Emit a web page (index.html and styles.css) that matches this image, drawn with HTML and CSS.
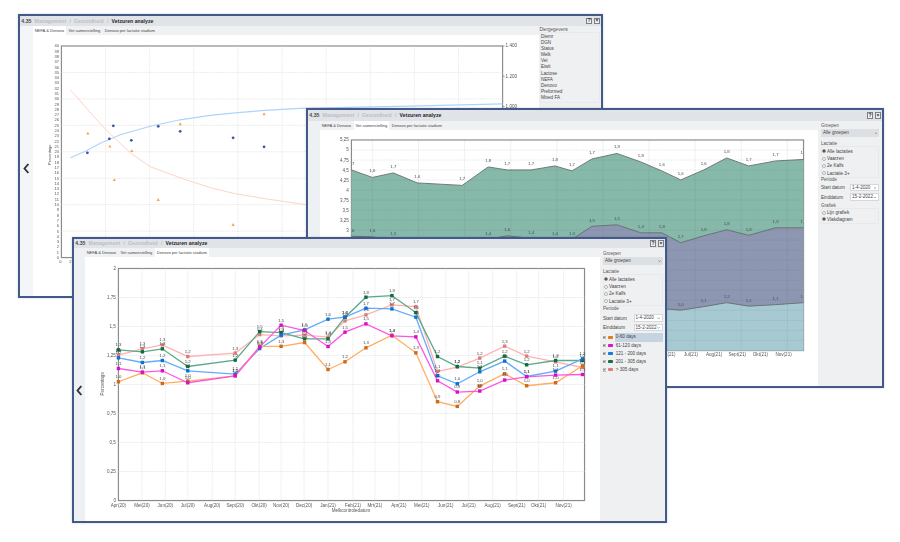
FILE: index.html
```html
<!DOCTYPE html>
<html lang="nl">
<head>
<meta charset="utf-8">
<title>Vetzuren analyze</title>
<link rel="stylesheet" href="styles.css">
</head>
<body>
<div class="desktop">

  <section class="win win-a">
    <header class="win-head">
      <span class="crumb-no">4.35</span><span class="crumb">Management</span><span class="crumb">/</span><span class="crumb">Gezondheid</span><span class="crumb">/</span><span class="crumb-now">Vetzuren analyze</span>
      <span class="btns"><span class="btn">?</span><span class="btn">×</span></span>
    </header>
    <div class="win-body">
      <div class="rail"><svg class="chev" viewBox="0 0 6 10"><path d="M5 .8 1.4 5 5 9.2"/></svg></div>
      <main class="main">
        <nav class="tabs"><span class="tab on">NEFA &amp; Denovo</span><span class="tab">Vet samenstelling</span><span class="tab">Denovo per lactatie stadium</span></nav>
        <svg id="chart-a" class="chart chart-a" viewBox="33 35 506 261.5"></svg>
      </main>
      <aside class="side side-a">
        <div class="grp-title">Diergegevens</div>
        <div class="box list">
          <div class="item">Diernr</div><div class="item">DGN</div><div class="item">Status</div><div class="item">Melk</div><div class="item">Vet</div><div class="item">Eiwit</div><div class="item">Lactose</div><div class="item">NEFA</div><div class="item">Denovo</div><div class="item">Preformed</div><div class="item">Mixed FA</div>
        </div>
        <div class="grp-title gap-b">Groepen</div>
      </aside>
    </div>
  </section>

  <section class="win win-b">
    <header class="win-head">
      <span class="crumb-no">4.35</span><span class="crumb">Management</span><span class="crumb">/</span><span class="crumb">Gezondheid</span><span class="crumb">/</span><span class="crumb-now">Vetzuren analyze</span>
      <span class="btns"><span class="btn">?</span><span class="btn">×</span></span>
    </header>
    <div class="win-body">
      <div class="rail"></div>
      <main class="main">
        <nav class="tabs"><span class="tab">NEFA &amp; Denovo</span><span class="tab on">Vet samenstelling</span><span class="tab">Denovo per lactatie stadium</span></nav>
        <svg id="chart-b" class="chart chart-b" viewBox="320 130 498 256.5"></svg>
      </main>
      <aside class="side side-b">
        <div class="grp-title">Groepen</div>
        <div class="select">Alle groepen</div>
        <div class="grp-title gap-a">Lactatie</div>
        <div class="box opts">
          <div class="opt"><span class="radio on"></span>Alle lactaties</div>
          <div class="opt"><span class="radio"></span>Vaarzen</div>
          <div class="opt"><span class="radio"></span>2e Kalfs</div>
          <div class="opt"><span class="radio"></span>Lactatie 3+</div>
        </div>
        <div class="grp-title gap-b">Periode</div>
        <div class="field"><span>Start datum</span><span class="date">1-4-2020</span></div>
        <div class="field"><span>Einddatum</span><span class="date">15-2-2022</span></div>
        <div class="grp-title gap-g">Grafiek</div>
        <div class="box opts">
          <div class="opt short"><span class="radio"></span>Lijn grafiek</div>
          <div class="opt short"><span class="radio on"></span>Vlakdiagram</div>
        </div>
      </aside>
    </div>
  </section>

  <section class="win win-c">
    <header class="win-head">
      <span class="crumb-no">4.35</span><span class="crumb">Management</span><span class="crumb">/</span><span class="crumb">Gezondheid</span><span class="crumb">/</span><span class="crumb-now">Vetzuren analyze</span>
      <span class="btns"><span class="btn">?</span><span class="btn">×</span></span>
    </header>
    <div class="win-body">
      <div class="rail"><svg class="chev" viewBox="0 0 6 10"><path d="M5 .8 1.4 5 5 9.2"/></svg></div>
      <main class="main">
        <nav class="tabs"><span class="tab">NEFA &amp; Denovo</span><span class="tab">Vet samenstelling</span><span class="tab on">Denovo per lactatie stadium</span></nav>
        <svg id="chart-c" class="chart chart-c" viewBox="85 257 515 264.5"></svg>
      </main>
      <aside class="side side-c">
        <div class="grp-title">Groepen</div>
        <div class="select">Alle groepen</div>
        <div class="grp-title gap-a">Lactatie</div>
        <div class="box opts">
          <div class="opt"><span class="radio on"></span>Alle lactaties</div>
          <div class="opt"><span class="radio"></span>Vaarzen</div>
          <div class="opt"><span class="radio"></span>2e Kalfs</div>
          <div class="opt"><span class="radio"></span>Lactatie 3+</div>
        </div>
        <div class="grp-title gap-b">Periode</div>
        <div class="field"><span>Start datum</span><span class="date">1-4-2020</span></div>
        <div class="field"><span>Einddatum</span><span class="date">15-2-2022</span></div>
        <ul class="legend">
          <li class="leg"><span class="check"></span><span class="swatch s-orange"></span><span class="leg-name sel">0-60 days</span></li>
          <li class="leg"><span class="check"></span><span class="swatch s-magenta"></span><span class="leg-name">61-120 days</span></li>
          <li class="leg"><span class="check"></span><span class="swatch s-blue"></span><span class="leg-name">121 - 200 days</span></li>
          <li class="leg"><span class="check"></span><span class="swatch s-green"></span><span class="leg-name">201 - 305 days</span></li>
          <li class="leg"><span class="check"></span><span class="swatch s-salmon"></span><span class="leg-name">&gt; 305 days</span></li>
        </ul>
      </aside>
    </div>
  </section>

</div>
<script src="charts.js"></script>
</body>
</html>
```

FILE: styles.css
```css
* { box-sizing: border-box; }
html, body { margin: 0; padding: 0; background: #fff; }
body { width: 900px; height: 542px; overflow: hidden; font-family: "Liberation Sans", Arial, sans-serif; }
.desktop { position: relative; width: 900px; height: 542px; filter: blur(.42px); }

.win { position: absolute; display: flex; flex-direction: column; background: #fff; border: 2px solid #42598a; box-shadow: 0 0 2px rgba(40,60,100,.25); }
.win-a { left: 17.5px; top: 13.5px; width: 585.5px; height: 284.5px; }
.win-b { left: 305.5px; top: 107.5px; width: 578.5px; height: 280.5px; }
.win-c { left: 71.5px; top: 236.5px; width: 595.5px; height: 286.5px; }

.win-head { display: flex; align-items: center; gap: 3.2px; flex: none; padding: 0 1px 0 1.8px; background: #e0e4e8; font-size: 5.1px; font-weight: 700; letter-spacing: .05px; white-space: nowrap; }
.win-a .win-head { height: 10.5px; }
.win-b .win-head { height: 11.5px; }
.win-c .win-head { height: 9.5px; }
.crumb-no { color: #4a4a4a; }
.crumb { color: #bcbec2; }
.crumb-now { color: #222; }
.btns { display: flex; gap: 2px; margin-left: auto; }
.btn { display: flex; align-items: center; justify-content: center; width: 6px; height: 6.5px; background: #f0f2f4; border: 1px solid #7a7f86; font-size: 5px; line-height: 1; color: #222; letter-spacing: 0; }

.win-body { flex: 1; display: flex; min-height: 0; }
.rail { flex: none; display: flex; align-items: center; justify-content: center; background: #eef1f4; }
.win-a .rail { width: 13.5px; padding-top: 14px; background: #f3f5f8; }
.win-b .rail { width: 12.5px; }
.win-c .rail { width: 11.5px; padding-top: 12px; }
.chev { width: 6.4px; height: 11px; }
.chev path { fill: none; stroke: #333; stroke-width: 1.7; }

.main { flex: 1; display: flex; flex-direction: column; min-width: 0; }
.tabs { display: flex; flex: none; height: 9px; background: #f0f1f2; font-size: 4.05px; color: #444; align-items: stretch; white-space: nowrap; }
.tab { display: flex; align-items: center; padding: 0 1.7px; margin-right: 1.2px; }
.tab.on { background: #fff; }
.chart { display: block; flex: 1; width: 100%; min-height: 0; }
.chart-a { width: 506px; height: 261.5px; }
.chart-b { width: 498px; height: 256.5px; }
.chart-c { width: 515px; height: 264.5px; }

.side { flex: none; display: flex; flex-direction: column; background: #eff0f1; font-size: 4.6px; color: #444; }
.side-a { width: 62.5px; padding: .5px 1.5px 0 1px; }
.side-b { width: 64.5px; padding: 1.5px 3px 0 3.5px; }
.side-c { width: 65.5px; padding: 2.5px 2.5px 0 3.5px; }
.grp-title { flex: none; height: 5px; line-height: 5px; color: #555; }
.gap-a { margin-top: 4px; }
.gap-b { margin-top: .2px; }
.gap-g { margin-top: 2px; }
.side-a .gap-b { margin-top: 5px; }
.side-b .gap-b { margin-top: -.8px; }
.box { border: 1px solid #e8e9eb; }
.opts { padding-top: .6px; }
.list { padding: 1px 0 0 .4px; }
.item { height: 6.2px; line-height: 6.2px; }
.select { position: relative; height: 8px; margin-top: 1.5px; padding-left: 2px; line-height: 8px; background: #dde0e3; }
.select::after, .date::after { content: ""; position: absolute; right: 1.6px; top: 50%; width: 2.8px; height: 1.7px; margin-top: -.8px; background: #777; clip-path: polygon(0 0, 50% 65%, 100% 0, 100% 35%, 50% 100%, 0 35%); }
.opt { display: flex; align-items: center; gap: 1px; height: 7.3px; }
.opt.short { height: 6.5px; }
.radio { flex: none; width: 4px; height: 4px; border: 1px solid #aeb0b2; border-radius: 50%; background: #fff; }
.radio.on { background: #3c3c3c; border-color: #9a9a9a; }
.field { display: flex; align-items: center; justify-content: space-between; height: 7.5px; margin-top: 2px; }
.grp-title + .field { margin-top: 3.5px; }
.side-b .grp-title + .field { margin-top: 2px; }
.date { position: relative; width: 29px; height: 100%; padding-left: 1px; line-height: 5.5px; background: #fff; border: 1px solid #d6d8db; }
.legend { list-style: none; margin: 2px 0 0; padding: 0; }
.leg { display: flex; align-items: center; height: 8.1px; }
.check { position: relative; flex: none; width: 3.4px; height: 3.4px; background: #f4f4f4; box-shadow: inset 0 0 0 .4px #9a9a9a; margin-left: -.5px; }
.check::after { content: ""; position: absolute; left: .5px; top: .5px; width: 2.4px; height: 2px; background: #333; clip-path: polygon(0 45%, 15% 30%, 40% 60%, 85% 0, 100% 20%, 40% 100%); }
.swatch { flex: none; width: 5px; height: 2.8px; margin: 0 1.2px 0 2.6px; border-radius: .8px; background: currentColor; }
.s-orange { color: #dd7e20; }
.s-magenta { color: #d418c4; }
.s-blue { color: #1a7ad8; }
.s-green { color: #14733f; }
.s-salmon { color: #d97f7f; }
.leg-name { flex: 1; height: 100%; padding-left: 1px; line-height: 8.1px; }
.leg-name.sel { background: #c6d4e1; }

.chart text { font-family: "Liberation Sans", Arial, sans-serif; font-size: 4.6px; fill: #555; }
.chart .dlabel { fill: #4a4a4a; font-size: 4.3px; }
.chart .tiny { font-size: 4px; }
.frame { fill: #fff; stroke: #8c8c8c; stroke-width: 1.2; }
.frame-line { fill: none; stroke: #8c8c8c; stroke-width: .9; }
.grid { stroke: #d6d6d6; stroke-width: .6; stroke-dasharray: 1 .8; fill: none; }
.grid-over { stroke: rgba(60,85,85,.28); stroke-width: .5; stroke-dasharray: 1 .8; fill: none; }
.a-green { fill: #86b9a9; }
.a-purple { fill: #8e97b2; }
.a-teal { fill: #a7cad2; }
.a-line { fill: none; stroke: #666e6e; stroke-width: .9; }
.trend-blue { fill: none; stroke: #aed3fb; stroke-width: 1.1; }
.trend-orange { fill: none; stroke: #fed2bd; stroke-width: .95; }
.dot-blue { fill: #3d57a6; }
.tri-orange { fill: #f6a545; }
.l-orange { fill: none; stroke: #ffad60; stroke-width: 1.3; }
.l-magenta { fill: none; stroke: #ff55e6; stroke-width: 1.3; }
.l-blue { fill: none; stroke: #5fadf9; stroke-width: 1.3; }
.l-green { fill: none; stroke: #5aa98a; stroke-width: 1.3; }
.l-salmon { fill: none; stroke: #ffb3b0; stroke-width: 1.3; }
.m-orange { fill: #c96c1c; }
.m-magenta { fill: #d612c0; }
.m-blue { fill: #0e6fd0; }
.m-green { fill: #0e6b3b; }
.m-salmon { fill: #d97d7d; }
```

FILE: charts.js
```js
(function () {
  var NS = "http://www.w3.org/2000/svg";

  function add(parent, tag, attrs, text) {
    var el = document.createElementNS(NS, tag);
    for (var k in attrs) el.setAttribute(k, attrs[k]);
    if (text !== undefined) el.textContent = text;
    parent.appendChild(el);
    return el;
  }
  function pts(list) {
    return list.map(function (p) { return p[0] + "," + p[1]; }).join(" ");
  }
  function hLine(svg, cls, x1, x2, y) { add(svg, "line", { "class": cls, x1: x1, x2: x2, y1: y, y2: y }); }
  function vLine(svg, cls, y1, y2, x) { add(svg, "line", { "class": cls, x1: x, x2: x, y1: y1, y2: y2 }); }
  function label(svg, x, y, text, anchor, cls) {
    return add(svg, "text", { x: x, y: y, "text-anchor": anchor || "middle", "class": cls || "" }, text);
  }
  function clip(svg, id, x, y, w, h) {
    var cp = add(add(svg, "defs", {}), "clipPath", { id: id });
    add(cp, "rect", { x: x, y: y, width: w, height: h });
  }

  /* ---------- NEFA & Denovo (back window) ---------- */
  (function () {
    var svg = document.getElementById("chart-a");
    var L = 61, R = 503, T = 46, B = 258;
    add(svg, "rect", { "class": "frame", x: L, y: T, width: R - L, height: B - T });
    for (var v = 5; v < 40; v += 5) hLine(svg, "grid", L, R, B - v * 5.3);
    for (var i = 1; i < 10; i++) vLine(svg, "grid", T, B, L + i * 44.2);
    for (v = 0; v <= 40; v++) label(svg, 58.5, B - v * 5.3 + 1.4, String(v), "end", "tiny");
    label(svg, 60, 263.5, "0", "middle", "tiny");
    label(svg, 70, 263.5, "2", "middle", "tiny");
    ["1.400", "1.200", "1.000"].forEach(function (t, n) {
      hLine(svg, "frame-line", R, R + 2, T + n * 30.3);
      label(svg, 506, T + n * 30.3 + 1.5, t, "start");
    });
    var title = label(svg, 0, 0, "Percentage", "middle", "tiny");
    title.setAttribute("transform", "translate(50.5 155) rotate(-90)");

    add(svg, "polyline", { "class": "trend-blue", points: pts([[70,158],[85,151.5],[100,143.5],[120,135],[150,126.5],[180,120],[210,115.5],[235,113],[265,110.5],[300,108.5],[350,107.5],[420,106],[503,104]]) });
    add(svg, "polyline", { "class": "trend-orange", points: pts([[70,90],[85,107],[100,124],[115,139],[130,153],[150,167],[180,178],[210,188],[235,194],[265,199],[306,205],[360,214],[503,225]]) });
    [[87,153],[109,139],[113,126],[131,140.5],[158,126.5],[180,131.5],[233,138],[264,147]].forEach(function (p) {
      add(svg, "circle", { "class": "dot-blue", cx: p[0], cy: p[1], r: 1.4 });
    });
    [[87.5,133.5],[109.5,146.5],[114,180],[131.5,151],[158,200],[180,124],[233,225],[264,114]].forEach(function (p) {
      add(svg, "polygon", { "class": "tri-orange", points: (p[0]-1.6)+","+(p[1]+1.3)+" "+(p[0]+1.6)+","+(p[1]+1.3)+" "+p[0]+","+(p[1]-1.6) });
    });
  })();

  /* ---------- Vet samenstelling (middle window) ---------- */
  (function () {
    var svg = document.getElementById("chart-b");
    var L = 351, R = 804, T = 140, B = 351, S = 10.04;
    clip(svg, "plot-b", L, T - 10, R - L, B - T + 10);
    add(svg, "rect", { "class": "frame", x: L, y: T, width: R - L, height: B - T });
    var xs = [351,372,393,417,462,488,507,531,555,572,592,617,641,662,681,704,727,749,776,804];
    var top = [170,177.5,173,183,185.5,167,170,170,166,171,159,153.5,162,171,180,170,158,166,161,159.5];
    var mid = [236.5,237,240,247,250,239.5,236,238.5,240,239.5,226.5,225,233,233,243,236,230,235.5,228,228];
    var low = [320,321,322,324,326,318,316,318,320,322,316,315,317,309,310.5,307,303,306.5,305,303];
    function area(cls, list) {
      add(svg, "polygon", { "class": cls, points: pts(xs.map(function (x, i) { return [x, list[i]]; })) + " " + R + "," + B + " " + L + "," + B });
    }
    area("a-green", top);
    area("a-purple", mid);
    area("a-teal", low);
    [top, mid, low].forEach(function (list) {
      add(svg, "polyline", { "class": "a-line", points: pts(xs.map(function (x, i) { return [x, list[i]]; })) });
    });
    for (var k = 1; k < 21; k++) hLine(svg, "grid-over", L, R, T + k * S);
    for (var i = 0; i < 10; i++) vLine(svg, "grid-over", T, B, 372 + i * 46.2);
    ["5,25","5","4,75","4,5","4,25","4","3,75","3,5","3,25","3","2,75"].forEach(function (t, n) {
      label(svg, 348.5, T + n * S + 1.5, t, "end");
    });
    var inner = add(svg, "g", { "clip-path": "url(#plot-b)" });
    function dataLabels(texts, ys, off) {
      texts.forEach(function (t, n) {
        var y = ys[n] - off;
        /* the front window covers everything left of x=668 below y=238 */
        if (xs[n] < 668 && y > 238) return;
        label(inner, xs[n], y, t, "middle", "dlabel");
      });
    }
    dataLabels(["1,7","1,6","1,7","1,6","1,7","1,8","1,7","1,7","1,8","1,7","1,7","1,8","1,8","1,6","1,6","1,6","1,8","1,7","1,7","1,7"], top, 5);
    dataLabels(["1,6","1,6","1,5","1,4","1,4","1,4","1,6","1,4","1,4","1,3","1,5","1,5","1,4","1,8","1,7","1,8","1,8","1,8","1,9","1,9"], mid, 4.5);
    dataLabels(["1,0","1,1","1,1","1,0","1,0","1,1","1,1","1,1","1,1","1,1","1,1","1,2","1,1","1,0","1,0","1,1","1,2","1,1","1,1","1,2"], low, 4.5);
    ["Jun(21)","Jul(21)","Aug(21)","Sept(21)","Okt(21)","Nov(21)"].forEach(function (t, n) {
      label(svg, 668 + n * 23.2, 356.5, t);
    });
  })();

  /* ---------- Denovo per lactatie stadium (front window) ---------- */
  (function () {
    var svg = document.getElementById("chart-c");
    var L = 118, R = 585, T = 268.5, B = 501;
    add(svg, "rect", { "class": "frame", x: L, y: T, width: R - L, height: B - T });
    for (var k = 1; k < 8; k++) hLine(svg, "grid", L, R, B - k * 29.06);
    var gx = [141.6,165,187.5,212,235,259,281,304,328,353,375,399,422,446,469,493,517,539,564];
    gx.forEach(function (x) { vLine(svg, "grid", T, B, x); });
    ["0","0,25","0,5","0,75","1","1,25","1,5","1,75","2"].forEach(function (t, n) {
      label(svg, 115.5, B - n * 29.06 + 1.5, t, "end");
    });
    ["Apr(20)","Mei(20)","Jun(20)","Jul(20)","Aug(20)","Sept(20)","Okt(20)","Nov(20)","Dec(20)","Jan(21)","Feb(21)","Mrt(21)","Apr(21)","Mei(21)","Jun(21)","Jul(21)","Aug(21)","Sept(21)","Okt(21)","Nov(21)"].forEach(function (t, n) {
      label(svg, n === 0 ? 118 : gx[n - 1], 507.5, t);
    });
    label(svg, 351, 512, "Melkcontroledatum");
    var yt = label(svg, 0, 0, "Percentage");
    yt.setAttribute("transform", "translate(104 384) rotate(-90)");

    var xs = [118,142,162,187.5,235,259.5,281,304.5,328,345,366,392,416,437.7,457.5,480,505,527,556,583];
    var series = [
      ["salmon", [355.3,349,345,356.7,353.3,334.7,336,335.3,337.3,321,315,305,306.7,371.7,367.3,358.3,346.3,356.3,362,367.7]],
      ["green",  [350,352,349,366.7,360.3,331.7,332.7,339,339,317.3,297.3,295.7,312.7,356.7,366.7,368.3,356.3,365,360.7,360.7]],
      ["blue",   [358,362.7,360.7,371,374.3,348.7,335.3,330,319.3,317.3,308.3,309,317.3,376,384,372,361.3,376.7,371.3,359]],
      ["orange", [382,373,383.7,381.3,376,346.5,346.5,342.7,369.7,362,348,335.3,353,402,406.7,386.3,374,386,383,366]],
      ["magenta",[368.7,372.3,371,383,376,347.3,325.3,330.7,346.7,332.3,324,336,337,381,392.3,391.3,380.3,377,375.3,374.7]]
    ];
    series.forEach(function (s) {
      add(svg, "polyline", { "class": "l-" + s[0], points: pts(xs.map(function (x, i) { return [x, s[1][i]]; })) });
    });
    series.forEach(function (s) {
      s[1].forEach(function (y, i) {
        add(svg, "rect", { "class": "m-" + s[0], x: xs[i] - 1.7, y: y - 1.7, width: 3.4, height: 3.4 });
        var val = ((B - y) / 116.25).toFixed(1).replace(".", ",");
        label(svg, xs[i], y - 3.6, val, "middle", "dlabel");
      });
    });
  })();
})();
```
